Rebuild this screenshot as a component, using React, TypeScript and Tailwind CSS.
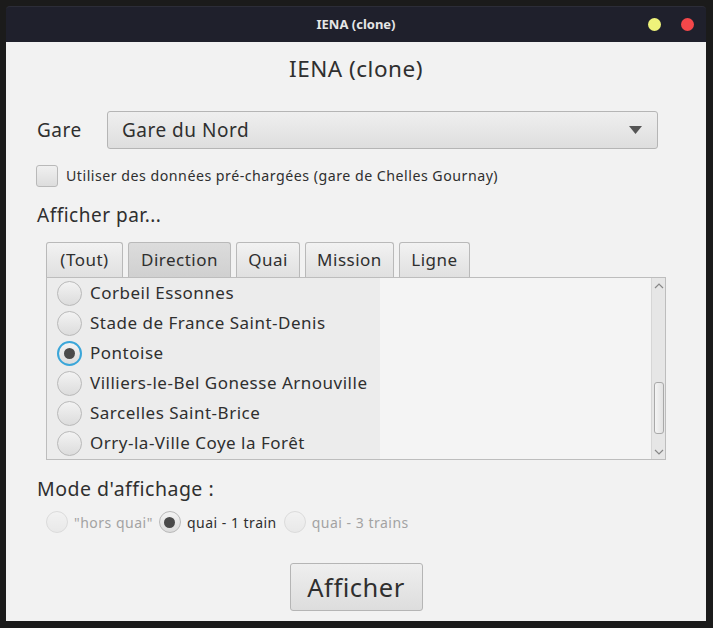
import React from 'react';

const directions = [
  'Corbeil Essonnes',
  'Stade de France Saint-Denis',
  'Pontoise',
  'Villiers-le-Bel Gonesse Arnouville',
  'Sarcelles Saint-Brice',
  'Orry-la-Ville Coye la Forêt',
];

const tabs = [
  { label: '(Tout)', w: 'w-[77px]' },
  { label: 'Direction', w: 'w-[103px]' },
  { label: 'Quai', w: 'w-[64px]' },
  { label: 'Mission', w: 'w-[89px]' },
  { label: 'Ligne', w: 'w-[71px]' },
];

function Radio({ checked = false, focused = false, size = 'big', disabled = false }: { checked?: boolean; focused?: boolean; size?: 'big' | 'small'; disabled?: boolean }) {
  const dim = size === 'big' ? 'w-[25px] h-[25px]' : 'w-[22px] h-[22px]';
  return (
    <span
      className={`relative flex items-center justify-center rounded-full shrink-0 ${dim} ${
        focused ? 'border-2 border-[#3aa6d9]' : 'border border-[#b9b9b9]'
      } ${disabled ? 'opacity-40' : ''} bg-gradient-to-b from-[#f3f3f3] to-[#dcdcdc]`}
    >
      {checked && <span className="w-[11px] h-[11px] rounded-full bg-[#4a4a4a]" />}
    </span>
  );
}

export default function App() {
  return (
    <div className="w-[713px] h-[628px] bg-[#1b1b1b] pt-[6px] pl-[6px] overflow-hidden" style={{ fontFamily: '"Noto Sans", "Open Sans", sans-serif' }}>
      <div className="w-[700px] h-[615px] flex flex-col">
        {/* title bar */}
        <div className="h-[36px] bg-[#1f202c] rounded-t-[4px] border-t border-[#2c2d38] flex items-center relative">
          <div className="flex-1 text-center text-[13px] font-bold text-[#e6e6e6]">IENA (clone)</div>
          <span className="absolute left-[642px] top-[11px] w-[13px] h-[13px] rounded-full bg-[#eef27a]" />
          <span className="absolute left-[675px] top-[11px] w-[13px] h-[13px] rounded-full bg-[#f4474a]" />
        </div>

        {/* content */}
        <div className="flex-1 bg-[#f2f2f2] flex flex-col text-[#2f2f2f] tracking-[0.5px]">
          <div className="mt-[12px] h-[30px] flex items-center justify-center text-[22.5px]">IENA (clone)</div>

          <div className="mt-[27px] h-[38px] flex items-center pl-[31px] pr-[48px]">
            <div className="w-[70px] text-[19px]">Gare</div>
            <div className="flex-1 h-full flex items-center rounded-[3px] border border-[#b5b5b5] bg-gradient-to-b from-[#efefef] to-[#dedede] pl-[14px] pr-[15px]">
              <span className="flex-1 text-[19px]">Gare du Nord</span>
              <svg width="13" height="8" viewBox="0 0 13 8"><path d="M0 0h13L6.5 8z" fill="#555" /></svg>
            </div>
          </div>

          <div className="mt-[16px] h-[22px] flex items-center pl-[30px]">
            <span className="w-[22px] h-[22px] rounded-[3px] border border-[#b9b9b9] bg-gradient-to-b from-[#f0f0f0] to-[#dddddd]" />
            <span className="ml-[8px] text-[14.2px]">Utiliser des données pré-chargées (gare de Chelles Gournay)</span>
          </div>

          <div className="mt-[15px] h-[26px] flex items-center pl-[31px] text-[19px]">Afficher par...</div>

          <div className="mt-[14px] h-[35px] flex items-end pl-[40px] gap-[5px]">
            {tabs.map((t) => (
              <div
                key={t.label}
                className={`${t.w} h-full flex items-center justify-center text-[17px] border border-b-0 border-[#b9b9b9] rounded-t-[3px] ${
                  t.label === 'Direction' ? 'bg-gradient-to-b from-[#dcdcdc] to-[#d0d0d0]' : 'bg-gradient-to-b from-[#f2f2f2] to-[#e0e0e0]'
                }`}
              >
                {t.label}
              </div>
            ))}
          </div>

          <div className="ml-[40px] w-[620px] h-[183px] border border-[#bdbdbd] bg-[#f4f4f4] flex">
            <div className="w-[333px] bg-[#ececec] flex flex-col">
              {directions.map((d, i) => (
                <div key={d} className="h-[30px] flex items-center pl-[10px] gap-[8px] text-[17px]">
                  <Radio checked={i === 2} focused={i === 2} />
                  <span>{d}</span>
                </div>
              ))}
            </div>
            <div className="flex-1" />
            <div className="w-[14px] bg-[#e6e6e6] border-l border-[#d6d6d6] flex flex-col items-center py-[2px]">
              <svg width="10" height="8" viewBox="0 0 10 8" className="mt-[2px]"><path d="M1 6l4-4 4 4" stroke="#888" strokeWidth="1.2" fill="none" /></svg>
              <div className="flex-1" />
              <div className="w-[10px] h-[52px] rounded-[3px] border border-[#a9a9a9] bg-gradient-to-r from-[#f4f4f4] to-[#e2e2e2]" />
              <div className="h-[14px]" />
              <svg width="10" height="8" viewBox="0 0 10 8" className="mb-[1px]"><path d="M1 2l4 4 4-4" stroke="#888" strokeWidth="1.2" fill="none" /></svg>
            </div>
          </div>

          <div className="mt-[16px] h-[26px] flex items-center pl-[31px] text-[19.5px]">Mode d'affichage :</div>

          <div className="mt-[8px] h-[24px] flex items-center pl-[40px] text-[14px]">
            <Radio size="small" disabled />
            <span className="ml-[6px] text-[#a3a3a3]">"hors quai"</span>
            <span className="ml-[6px]"><Radio size="small" checked /></span>
            <span className="ml-[6px]">quai - 1 train</span>
            <span className="ml-[7px]"><Radio size="small" disabled /></span>
            <span className="ml-[6px] text-[#a3a3a3]">quai - 3 trains</span>
          </div>

          <div className="mt-[29px] flex justify-center">
            <div className="w-[133px] h-[48px] flex items-center justify-center text-[25.5px] rounded-[3px] border border-[#b5b5b5] bg-gradient-to-b from-[#efefef] to-[#dddddd]">
              Afficher
            </div>
          </div>
        </div>
      </div>
    </div>
  );
}
